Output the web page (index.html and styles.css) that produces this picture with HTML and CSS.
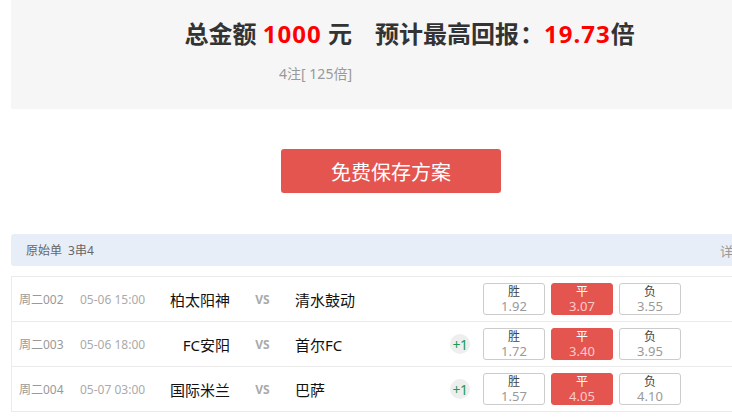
FILE: index.html
```html
<!DOCTYPE html>
<html lang="zh-CN">
<head>
<meta charset="utf-8">
<title>方案</title>
<link rel="stylesheet" href="styles.css">
</head>
<body>
<div class="page">
  <section class="summary">
    <div class="sum-left">
      <div class="sum-title">总金额 <span class="red">1000</span> 元</div>
      <div class="sum-sub">4注[ 125倍]</div>
    </div>
    <div class="sum-right">
      <div class="sum-title">预计最高回报<span class="colon">：</span><span class="red">19.73</span>倍</div>
    </div>
  </section>

  <div class="btn-wrap">
    <button class="save-btn">免费保存方案</button>
  </div>

  <div class="bar">
    <span class="bar-title">原始单</span><span class="bar-type">3串4</span>
    <span class="bar-more">详情</span>
  </div>

  <div class="matches">
    <div class="row">
      <span class="code">周二002</span>
      <span class="time">05-06 15:00</span>
      <span class="home">柏太阳神</span>
      <span class="vs">VS</span>
      <span class="away">清水鼓动</span>
      <span class="badge-slot"></span>
      <div class="odds">
        <div class="odd"><span class="lbl">胜</span><span class="num">1.92</span></div>
        <div class="odd on"><span class="lbl">平</span><span class="num">3.07</span></div>
        <div class="odd"><span class="lbl">负</span><span class="num">3.55</span></div>
      </div>
    </div>
    <div class="row">
      <span class="code">周二003</span>
      <span class="time">05-06 18:00</span>
      <span class="home">FC安阳</span>
      <span class="vs">VS</span>
      <span class="away">首尔FC</span>
      <span class="badge-slot"><span class="badge">+1</span></span>
      <div class="odds">
        <div class="odd"><span class="lbl">胜</span><span class="num">1.72</span></div>
        <div class="odd on"><span class="lbl">平</span><span class="num">3.40</span></div>
        <div class="odd"><span class="lbl">负</span><span class="num">3.95</span></div>
      </div>
    </div>
    <div class="row">
      <span class="code">周二004</span>
      <span class="time">05-07 03:00</span>
      <span class="home">国际米兰</span>
      <span class="vs">VS</span>
      <span class="away">巴萨</span>
      <span class="badge-slot"><span class="badge">+1</span></span>
      <div class="odds">
        <div class="odd"><span class="lbl">胜</span><span class="num">1.57</span></div>
        <div class="odd on"><span class="lbl">平</span><span class="num">4.05</span></div>
        <div class="odd"><span class="lbl">负</span><span class="num">4.10</span></div>
      </div>
    </div>
  </div>
</div>
</body>
</html>
```

FILE: styles.css
```css
html, body {
  margin: 0;
  padding: 0;
  overflow: hidden;
  background: #fff;
}
body {
  font-family: "Noto Sans", "Noto Sans CJK SC", sans-serif;
  color: #333;
}
.page {
  width: 800px;
  margin-left: 11px;
}
.summary {
  height: 109px;
  background: #f6f6f6;
  display: flex;
  align-items: flex-start;
  padding-top: 16px;
  box-sizing: border-box;
}
.sum-left {
  width: 341px;
  text-align: right;
}
.sum-right {
  margin-left: 23px;
}
.sum-title {
  font-size: 24px;
  line-height: 36px;
  font-weight: bold;
  color: #333;
  white-space: nowrap;
}
.red {
  color: #ff0000;
  letter-spacing: 1px;
}
.colon {
  padding-left: 1px;
}
.sum-sub {
  margin-top: 12px;
  font-size: 14px;
  line-height: 20px;
  color: #999;
}
.btn-wrap {
  padding-top: 40px;
  padding-left: 270px;
}
.save-btn {
  display: block;
  width: 220px;
  height: 44px;
  border: none;
  border-radius: 3px;
  background: #e55550;
  color: #fff;
  font-family: "Noto Sans", "Noto Sans CJK SC", sans-serif;
  font-size: 20px;
  padding: 0;
}
.bar {
  margin-top: 41px;
  height: 32px;
  background: #e7eef7;
  border-radius: 3px 0 0 3px;
  display: flex;
  align-items: center;
  padding-left: 15px;
  font-size: 12px;
  color: #666;
}
.bar-type {
  margin-left: 6px;
}
.bar-more {
  margin-left: auto;
  margin-right: 65px;
  color: #999;
  font-size: 13px;
}
.matches {
  margin-top: 10px;
  border: 1px solid #ebebeb;
  border-right: none;
}
.row {
  height: 44px;
  display: flex;
  align-items: center;
  padding-left: 7px;
  border-bottom: 1px solid #ebebeb;
}
.row:last-child {
  border-bottom: none;
}
.code {
  width: 61px;
  font-size: 12px;
  color: #999;
}
.time {
  width: 67px;
  font-size: 12px;
  color: #aaa;
}
.home {
  width: 83px;
  text-align: right;
  font-size: 15px;
  color: #111;
  white-space: nowrap;
}
.vs {
  width: 65px;
  text-align: center;
  font-size: 12px;
  font-weight: bold;
  color: #aaa;
}
.away {
  width: 155px;
  font-size: 15px;
  color: #111;
  white-space: nowrap;
}
.badge-slot {
  width: 20px;
  height: 20px;
  margin-right: 13px;
}
.badge {
  display: flex;
  width: 20px;
  height: 20px;
  border-radius: 50%;
  background: #eeeeee;
  color: #1f9a4c;
  font-size: 14px;
  align-items: center;
  justify-content: center;
  letter-spacing: -0.5px;
}
.odds {
  display: flex;
  gap: 6px;
  margin-top: -1px;
}
.odd {
  width: 62px;
  height: 32px;
  box-sizing: border-box;
  border: 1px solid #cccccc;
  border-radius: 3px;
  padding-top: 1px;
  display: flex;
  flex-direction: column;
  align-items: center;
  background: #fff;
}
.lbl {
  font-size: 12px;
  line-height: 14px;
  color: #444;
}
.num {
  font-size: 13px;
  line-height: 14px;
  color: #999;
}
.odd.on {
  background: #e55550;
  border-color: #e55550;
}
.odd.on .lbl {
  color: #fff;
}
.odd.on .num {
  color: #f9cccb;
}
```
